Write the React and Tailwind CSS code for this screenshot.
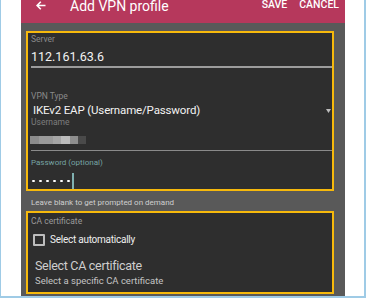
export default function App() {
  return (
    <div className="w-[366px] h-[298px] bg-white border-l border-r-2 border-b-2 border-[#9fcbe6] font-['Roboto',sans-serif] overflow-hidden">
      <div className="ml-[20px] w-[324px] h-[296px] bg-[#595959] flex flex-col">
        {/* app bar, scrolled so the title sits high */}
        <div className="h-[23px] shrink-0 bg-[#b6385c] flex items-start overflow-hidden text-white">
          <svg className="ml-[15px] mt-[1px]" width="10" height="9" viewBox="0 0 10 9" fill="none" stroke="white" strokeWidth="1.6">
            <path d="M9.5 4.5H1.2M4.8 0.8L1.1 4.5l3.7 3.7" />
          </svg>
          <span className="ml-[24px] -mt-[1px] text-[14px] leading-[14px]">Add VPN profile</span>
          <span className="ml-auto text-[10.5px] leading-[10px] font-medium">SAVE</span>
          <span className="ml-[12px] mr-[6px] text-[10.5px] leading-[10px] font-medium">CANCEL</span>
        </div>

        <div className="ml-[5px] w-[308px] mt-[8px]">
          {/* connection fields */}
          <div className="border-2 border-[#f6b90c] bg-[#2e2e2e] pl-[3px]">
            <div className="h-[12px] leading-[12px] text-[8.5px] text-[#8a8a8a]">Server</div>
            <div className="mt-[4px] h-[15px] leading-[15px] text-[12.5px] text-[#f2f2f2]">112.161.63.6</div>
            <div className="mt-[2px] h-[2px] bg-[#9c9c9c]" />

            <div className="mt-[24px] h-[9px] leading-[9px] text-[8.5px] text-[#8a8a8a]">VPN Type</div>
            <div className="mt-[2px] h-[15px] flex items-center">
              <span className="ml-[2px] text-[11.5px] tracking-[-0.15px] leading-[15px] text-[#f2f2f2]">IKEv2 EAP (Username/Password)</span>
              <svg className="ml-auto mr-[1px] mt-[1px]" width="5" height="4" viewBox="0 0 5 4">
                <path d="M0 0h5L2.5 4z" fill="#bdbdbd" />
              </svg>
            </div>
            <div className="h-[9px] leading-[9px] text-[8.5px] text-[#7d7d7d]">Username</div>
            <div className="mt-[9px] -ml-[1px] h-[8px] flex">
              <div className="w-[9px] bg-[#8c8c8c]" />
              <div className="w-[14px] bg-[#9a9a9a]" />
              <div className="w-[8px] bg-[#a6a6a6]" />
              <div className="w-[9px] bg-[#bcbcbc]" />
              <div className="w-[8px] bg-[#8e8e8e]" />
              <div className="w-[8px] bg-[#4a4a4a]" />
            </div>
            <div className="mt-[6px] h-[1px] bg-[#8a8a8a]" />

            <div className="mt-[7px] h-[10px] leading-[10px] text-[8px] text-[#76a3a3]">Password (optional)</div>
            <div className="mt-[5px] h-[16px] flex items-center">
              <div className="ml-[1px] flex gap-[4.5px]">
                {[0, 1, 2, 3, 4, 5].map((i) => (
                  <div key={i} className="w-[2.5px] h-[2.5px] rounded-full bg-white" />
                ))}
              </div>
              <div className="ml-[2px] w-[2px] h-[16px] bg-[#7fb0b0]" />
            </div>
          </div>

          <div className="mt-[7px] h-[10px] leading-[10px] pl-[5px] text-[8px] text-[#cfcfcf]">Leave blank to get prompted on demand</div>

          {/* certificate */}
          <div className="mt-[3px] border-2 border-[#f6b90c] bg-[#2e2e2e] pl-[3px] pb-[6px]">
            <div className="mt-[3px] h-[10px] leading-[10px] text-[8.5px] text-[#9a9a9a]">CA certificate</div>
            <div className="mt-[7px] h-[14px] flex items-center">
              <div className="ml-[2px] w-[12px] h-[12px] border-2 border-[#bdbdbd] rounded-[1px]" />
              <span className="ml-[5px] text-[10px] tracking-[-0.25px] leading-[14px] text-[#eeeeee]">Select automatically</span>
            </div>
            <div className="mt-[11px] h-[16px] leading-[16px] pl-[4px] text-[12.5px] tracking-[-0.3px] text-[#cfcfcf]">Select CA certificate</div>
            <div className="mt-[1px] h-[11px] leading-[11px] pl-[4px] text-[9.5px] text-[#c4c4c4]">Select a specific CA certificate</div>
          </div>
        </div>
      </div>
    </div>
  )
}
